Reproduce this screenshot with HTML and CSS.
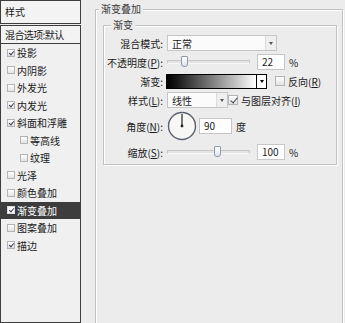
FILE: index.html
```html
<!DOCTYPE html>
<html lang="zh-CN">
<head>
  <meta charset="UTF-8" />
  <meta name="viewport" content="width=device-width, initial-scale=1.0" />
  <title>图层样式 - 渐变叠加</title>
  <link rel="stylesheet" href="styles.css">
</head>
<body>
  <div class="dialog">
    <aside class="side">
      <div class="side-head">样式</div>
      <div class="side-blend">混合选项:默认</div>
      <ul class="fx-list">
        <li class="fx"><span class="cb on"></span>投影</li>
        <li class="fx"><span class="cb"></span>内阴影</li>
        <li class="fx"><span class="cb"></span>外发光</li>
        <li class="fx"><span class="cb on"></span>内发光</li>
        <li class="fx"><span class="cb on"></span>斜面和浮雕</li>
        <li class="fx sub"><span class="cb"></span>等高线</li>
        <li class="fx sub"><span class="cb"></span>纹理</li>
        <li class="fx"><span class="cb"></span>光泽</li>
        <li class="fx"><span class="cb"></span>颜色叠加</li>
        <li class="fx active"><span class="cb on"></span>渐变叠加</li>
        <li class="fx"><span class="cb"></span>图案叠加</li>
        <li class="fx"><span class="cb on"></span>描边</li>
      </ul>
    </aside>

    <main class="panel">
      <fieldset class="group group-outer">
        <legend>渐变叠加</legend>
        <fieldset class="group group-inner">
          <legend>渐变</legend>
          <div class="form">
            <label class="lbl">混合模式:</label>
            <div class="ctl">
              <div class="select select-wide"><span>正常</span><i class="arrow"></i></div>
            </div>

            <label class="lbl">不透明度(<u>P</u>):</label>
            <div class="ctl">
              <div class="slider"><span class="thumb" style="left: 20%"></span></div>
              <div class="num">22</div>
              <span class="unit">%</span>
            </div>

            <label class="lbl">渐变:</label>
            <div class="ctl">
              <div class="gradient"><span class="ramp"></span><i class="arrow"></i></div>
              <span class="cb cb-lg"></span>
              <span class="opt">反向(<u>R</u>)</span>
            </div>

            <label class="lbl">样式(<u>L</u>):</label>
            <div class="ctl">
              <div class="select select-narrow"><span>线性</span><i class="arrow"></i></div>
              <span class="cb cb-lg on"></span>
              <span class="opt">与图层对齐(<u>I</u>)</span>
            </div>

            <label class="lbl">角度(<u>N</u>):</label>
            <div class="ctl">
              <svg class="dial" width="30" height="30" viewBox="0 0 30 30">
                <circle cx="15" cy="15" r="13.5" fill="#f7f7f5" stroke="#5b6172" stroke-width="1.4" />
                <line x1="15" y1="15" x2="15" y2="3" stroke="#222" stroke-width="1.2" />
                <circle cx="15" cy="15" r="1.4" fill="#222" />
              </svg>
              <div class="num num-angle">90</div>
              <span class="unit">度</span>
            </div>

            <label class="lbl">缩放(<u>S</u>):</label>
            <div class="ctl">
              <div class="slider"><span class="thumb" style="left: 61%"></span></div>
              <div class="num">100</div>
              <span class="unit">%</span>
            </div>
          </div>
        </fieldset>
      </fieldset>
    </main>
  </div>
</body>
</html>
```

FILE: styles.css
```css
* {
  box-sizing: border-box;
}

body {
  margin: 0;
  background-color: #ececec;
  font-family: "Noto Sans CJK SC", "Liberation Sans", sans-serif;
  font-size: 10px;
  color: #1a1a1a;
}

u {
  text-decoration: underline;
  text-underline-offset: 1px;
}

.dialog {
  display: flex;
  height: 323px;
  overflow: hidden;
}

/* left list */
.side {
  width: 81px;
  display: flex;
  flex-direction: column;
  flex-shrink: 0;
}

.side-head,
.side-blend {
  border: 1px solid #3e3e3e;
  background-color: #f3f3f3;
  padding-left: 4px;
  white-space: nowrap;
}

.side-head {
  height: 24px;
  line-height: 22px;
}

.side-blend {
  margin-top: 1px;
  height: 19px;
  line-height: 17px;
  letter-spacing: -0.6px;
}

.fx-list {
  list-style: none;
  margin: 0;
  padding: 0;
  height: 300px;
  border: 1px solid #3e3e3e;
  border-top: none;
  background-color: #f0f0f0;
}

.fx {
  display: flex;
  align-items: center;
  gap: 2px;
  height: 17.5px;
  padding-left: 6px;
  white-space: nowrap;
}

.fx.sub {
  padding-left: 19px;
}

.fx.active {
  background-color: #3d3d3d;
  color: #ffffff;
}

/* checkboxes */
.cb {
  position: relative;
  display: inline-block;
  width: 8px;
  height: 8px;
  flex-shrink: 0;
  border: 1px solid #b4b4b4;
  background: linear-gradient(#ffffff, #e2e2e2);
}

.cb.on::after {
  content: "";
  position: absolute;
  left: 2px;
  top: 0;
  width: 2px;
  height: 4px;
  border: solid #3a4458;
  border-width: 0 1.5px 1.5px 0;
  transform: rotate(40deg);
}

.fx.active .cb {
  background: #ffffff;
  border-color: #dcdcdc;
}

.cb-lg {
  width: 10px;
  height: 10px;
}

.cb-lg.on::after {
  left: 3px;
  top: 0;
  width: 3px;
  height: 6px;
}

/* right panel */
.panel {
  flex: 1;
  padding: 2px 2px 0 14px;
}

.group {
  margin: 0;
  min-width: 0;
  border: 1px solid #c2c2c2;
  box-shadow: inset 1px 1px 0 #ffffff, 1px 1px 0 #ffffff;
}

.group legend {
  padding: 0 2px;
  line-height: 14px;
  color: #3a3a3a;
  background-color: #ececec;
}

.group-outer {
  height: 340px;
  padding: 0 5px 0 7px;
}

.group-outer > legend {
  margin-left: -4px;
}

.group-inner {
  margin-top: 2px;
  padding: 0 6px 4px 7px;
}

.form {
  display: grid;
  grid-template-columns: 58px 1fr;
  grid-template-rows: 16px 16px 16px 16px 30px 16px;
  column-gap: 4px;
  row-gap: 3px;
  margin-left: -6px;
  padding-top: 3px;
}

.lbl {
  align-self: center;
  text-align: right;
  white-space: nowrap;
}

.ctl {
  display: flex;
  align-items: center;
  white-space: nowrap;
}

/* select boxes */
.select {
  display: flex;
  align-items: center;
  height: 16px;
  border: 1px solid #c6c6c6;
  background-color: #fbfbfb;
  padding-left: 4px;
}

.select span {
  flex: 1;
}

.select-wide {
  width: 110px;
}

.select-narrow {
  width: 61px;
}

.select .arrow {
  display: flex;
  align-items: center;
  justify-content: center;
  width: 11px;
  height: 14px;
  background-color: #efefef;
  border-left: 1px solid #dcdcdc;
}

.arrow::after {
  content: "";
  border-left: 2.5px solid transparent;
  border-right: 2.5px solid transparent;
  border-top: 3px solid #555;
}

/* sliders */
.slider {
  position: relative;
  width: 83px;
  height: 4px;
  margin-right: 7px;
  border: 1px solid #c8c8c8;
  border-bottom-color: #f8f8f8;
  background-color: #e4e4e4;
}

.thumb {
  position: absolute;
  top: -5px;
  width: 7px;
  height: 11px;
  margin-left: -3px;
  border: 1px solid #8f9bb0;
  border-radius: 1px 1px 3px 3px;
  background: linear-gradient(#ffffff, #dfe4ec);
}

/* number fields */
.num {
  width: 28px;
  height: 16px;
  line-height: 14px;
  padding-left: 4px;
  border: 1px solid #c6c6c6;
  background-color: #ffffff;
}

.num-angle {
  width: 33px;
  margin-left: 2px;
}

.unit {
  margin-left: 4px;
}

/* gradient swatch */
.gradient {
  display: flex;
  height: 15px;
  margin-left: -1px;
  margin-right: 8px;
  border: 1px solid #000000;
  background-color: #ffffff;
}

.ramp {
  width: 89px;
  background: linear-gradient(to right, #000000 0%, #1a1a1a 12%, #ffffff 100%);
}

.gradient .arrow {
  display: flex;
  align-items: center;
  justify-content: center;
  width: 10px;
  border-left: 1px solid #000000;
}

.gradient .arrow::after {
  border-top-color: #000000;
}

.opt {
  margin-left: 3px;
}

.dial {
  display: block;
  margin-left: 0;
}
```
